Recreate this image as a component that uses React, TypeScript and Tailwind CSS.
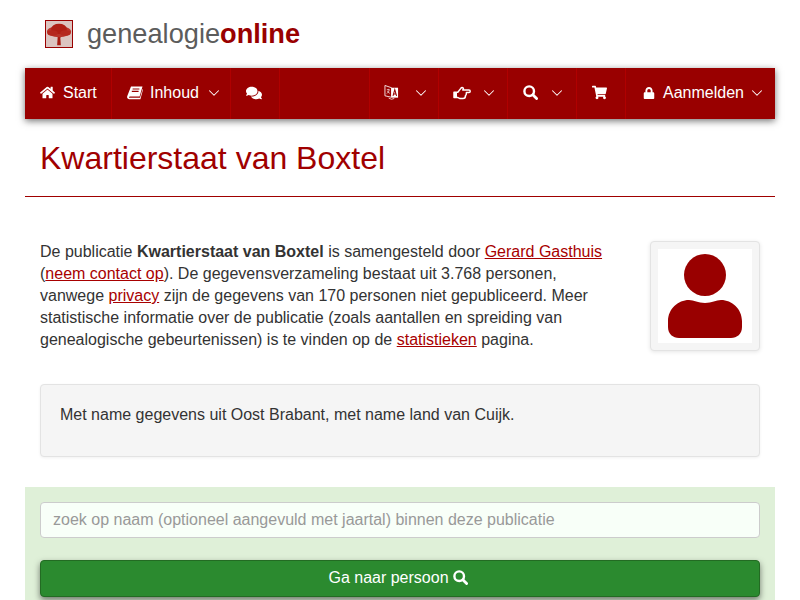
import React from 'react';
import { FaHome, FaComments, FaShoppingCart, FaLock } from 'react-icons/fa';
import { ChevronDown } from 'lucide-react';

const Chevron = () => <ChevronDown className="h-[18px] w-[18px] text-white" strokeWidth={1.4} />;

const NavItem: React.FC<{ className?: string; children?: React.ReactNode }> = ({ className = '', children }) => (
  <div className={`flex h-full shrink-0 items-center border-r border-[#b00000] pb-[2px] ${className}`}>{children}</div>
);

const Logo = () => (
  <svg viewBox="0 0 28 28" className="h-[28px] w-[28px] border border-[#990000] bg-[#dcc4c0]">
    <path d="M12 26 L12.6 17 L10 15 H18 L15.4 18 L16 26 Z" fill="#a81c12" />
    <ellipse cx="14" cy="11.5" rx="13" ry="6" fill="#b8342a" />
    <ellipse cx="14" cy="8.5" rx="8.5" ry="5.5" fill="#b01f15" />
    <ellipse cx="7" cy="13" rx="5.5" ry="3" fill="#b5281e" />
    <ellipse cx="21" cy="13" rx="5.5" ry="3" fill="#b5281e" />
  </svg>
);

const BookIcon = () => (
  <svg viewBox="0 0 16 14" className="h-[14px] w-[16px]" fill="white">
    <path d="M4 0.5 H15.5 L12.6 10.5 H3 C1.8 10.5 1.6 11.8 2.8 11.8 H13 L15.6 3 L16 3.6 L13.4 13.2 H2.4 C0.8 13.2 -0.3 11.8 0.2 10.2 Z" />
    <path d="M5.6 3 H12.4 M4.8 5.4 H11.6" stroke="#990000" strokeWidth="1.1" />
  </svg>
);

const LanguageIcon = () => (
  <svg viewBox="0 0 16 17" className="h-[17px] w-[15px]" fill="none">
    <path d="M1 1 L8 3.4 V13.6 L1 12 Z" stroke="white" strokeWidth="0.9" />
    <path d="M8 3.4 H15 V14 H8 Z" fill="white" />
    <path d="M9.6 12 L11.5 5.5 L13.4 12 M10.4 10 H12.6" stroke="#990000" strokeWidth="1.1" />
    <path d="M3 5.5 H6 M4.5 4.6 V5.5 M5.6 5.6 C5 8 4 9 2.8 9.6 M3.6 6.8 C4 8 5 9 6.2 9.4" stroke="white" strokeWidth="0.7" />
    <path d="M5 14.5 Q8 16.8 11 14.8" stroke="white" strokeWidth="0.8" />
  </svg>
);

const HandIcon = () => (
  <svg viewBox="0 0 18 14" className="h-[14px] w-[18px]" fill="none">
    <path
      d="M1 6.2 H4.8 L7.8 2.4 C8.4 1.2 10.2 1 10.4 2.6 L9.8 4 H16 C17.6 4 17.6 6.6 16 6.6 H13.4 C13.5 8 13.2 9 12.5 9.5 C12.5 11.2 11.5 12.6 10 12.6 H7 L5 11.6 H1 Z"
      stroke="white"
      strokeWidth="1.5"
      strokeLinejoin="round"
    />
    <path d="M1 6.2 H4 V11.6 H1 Z" fill="white" />
  </svg>
);

const SearchIcon = () => (
  <svg viewBox="0 0 15 15" className="h-[15px] w-[15px]" fill="none" stroke="white">
    <circle cx="6.2" cy="6.2" r="4.8" strokeWidth="2.4" />
    <path d="M9.8 9.8 L13.6 13.6" strokeWidth="2.8" strokeLinecap="round" />
  </svg>
);

const Avatar = () => (
  <svg viewBox="0 0 94 94" className="h-[94px] w-[94px]" fill="#990000">
    <circle cx="47" cy="26" r="21" />
    <path d="M10 76 V72 C10 60 20 51 31 51 C36 51 40 54 47 54 C54 54 58 51 63 51 C74 51 84 60 84 72 V78 C84 85 79 89 73 89 H21 C15 89 10 85 10 78 Z" />
  </svg>
);

export default function App() {
  return (
    <div className="h-[600px] w-[800px] overflow-hidden bg-white font-['Liberation_Sans',sans-serif] text-[16px] leading-[22px] text-[#333]">
      <div className="mx-[25px]">
        <div className="flex h-[68px] items-center pl-[20px]">
          <Logo />
          <div className="ml-[14px] text-[27.2px] leading-[30px] text-[#5c5c5c]">
            genealogie<span className="font-bold text-[#990000]">online</span>
          </div>
        </div>

        <nav className="flex h-[51px] items-center bg-[#990000] text-white shadow-[0_2px_7px_rgba(0,0,0,0.55)]">
          <NavItem className="w-[87px] gap-[8px] pl-[15px]">
            <FaHome className="h-[15px] w-[15px]" />
            <span>Start</span>
          </NavItem>
          <NavItem className="w-[119px] pl-[15px]">
            <BookIcon />
            <span className="ml-[7px]">Inhoud</span>
            <span className="ml-[6px]"><Chevron /></span>
          </NavItem>
          <NavItem className="w-[49px] pl-[15px]">
            <FaComments className="h-[16px] w-[16px]" />
          </NavItem>
          <NavItem className="w-[90px]" />
          <NavItem className="w-[69px] pl-[14px]">
            <LanguageIcon />
            <span className="ml-[13px]"><Chevron /></span>
          </NavItem>
          <NavItem className="w-[69px] pl-[14px]">
            <HandIcon />
            <span className="ml-[9px]"><Chevron /></span>
          </NavItem>
          <NavItem className="w-[69px] pl-[15px]">
            <SearchIcon />
            <span className="ml-[10px]"><Chevron /></span>
          </NavItem>
          <NavItem className="w-[49px] pl-[15px]">
            <FaShoppingCart className="h-[15px] w-[15px]" />
          </NavItem>
          <div className="flex h-full flex-1 items-center pb-[2px] pl-[17px]">
            <FaLock className="h-[12px] w-[12px]" />
            <span className="ml-[8px]">Aanmelden</span>
            <span className="ml-[4px]"><Chevron /></span>
          </div>
        </nav>

        <h1 className="h-[78px] border-b border-[#a00000] pl-[15px] pt-[21px] text-[32px] leading-[36px] font-normal text-[#a00000]">
          Kwartierstaat van Boxtel
        </h1>

        <div className="flex justify-between px-[15px] pt-[44px]">
          <p className="w-[580px]">
            De publicatie <b>Kwartierstaat van Boxtel</b> is samengesteld door <a className="text-[#a80000] underline">Gerard Gasthuis</a>
            <br />
            (<a className="text-[#a80000] underline">neem contact op</a>). De gegevensverzameling bestaat uit 3.768 personen,
            <br />
            vanwege <a className="text-[#a80000] underline">privacy</a> zijn de gegevens van 170 personen niet gepubliceerd. Meer
            <br />
            statistische informatie over de publicatie (zoals aantallen en spreiding van
            <br />
            genealogische gebeurtenissen) is te vinden op de <a className="text-[#a80000] underline">statistieken</a> pagina.
          </p>
          <div className="h-[110px] w-[110px] rounded-[4px] border border-[#e3e3e3] bg-[#f5f5f5] p-[7px] shadow-[0_1px_4px_rgba(0,0,0,0.1)]">
            <div className="bg-white">
              <Avatar />
            </div>
          </div>
        </div>

        <div className="mx-[15px] mt-[33px] h-[73px] rounded-[4px] border border-[#e3e3e3] bg-[#f5f5f5] px-[19px] pt-[19px] shadow-[0_1px_3px_rgba(0,0,0,0.06)]">
          Met name gegevens uit Oost Brabant, met name land van Cuijk.
        </div>

        <div className="mt-[30px] bg-[#dff0d8] px-[15px] pt-[15px] pb-[40px]">
          <div className="flex h-[36px] items-center rounded-[4px] border border-[#ccc] bg-[#f8fff8] px-[12px] text-[#999]">
            zoek op naam (optioneel aangevuld met jaartal) binnen deze publicatie
          </div>
          <button className="mt-[22px] flex h-[37px] w-full items-center justify-center gap-[4px] rounded-[4px] border border-[#236b23] bg-[#2b8a2f] pr-[4px] pb-[2px] text-white shadow-[0_3px_6px_rgba(0,0,0,0.5)]">
            Ga naar persoon
            <SearchIcon />
          </button>
        </div>
      </div>
    </div>
  );
}
